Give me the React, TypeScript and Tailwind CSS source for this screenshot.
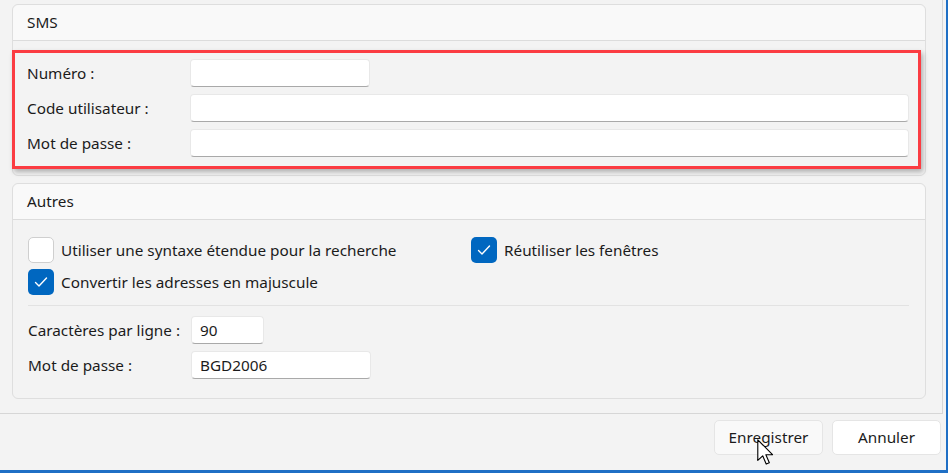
import type { ReactNode } from 'react'

const font = { fontFamily: '"Noto Sans", "Segoe UI", sans-serif' }

function Field({ width, value }: { width: string; value?: string }) {
  return (
    <div
      className={`${width} h-[28px] bg-white rounded-[4px] border border-[#e8e8e8] border-b-[#a9a9a9] flex items-center px-[8px] text-[15.3px] text-[#1b1b1b]`}
    >
      {value}
    </div>
  )
}

function Row({ label, children }: { label: string; children: ReactNode }) {
  return (
    <div className="flex items-center h-[28px]">
      <span className="w-[163px] shrink-0 text-[15.3px] text-[#1b1b1b]">{label}</span>
      {children}
    </div>
  )
}

function CheckBox({ checked, label }: { checked?: boolean; label: string }) {
  return (
    <div className="flex items-center h-[26px]">
      {checked ? (
        <div className="w-[26px] h-[26px] rounded-[5px] bg-[#0067c0] flex items-center justify-center">
          <svg width="16" height="16" viewBox="0 0 16 16" fill="none">
            <path d="M2.5 8.5 L6 12 L13.5 4" stroke="white" strokeWidth="1.4" strokeLinecap="round" strokeLinejoin="round" />
          </svg>
        </div>
      ) : (
        <div className="w-[26px] h-[26px] rounded-[5px] bg-white border border-[#cfcfcf]" />
      )}
      <span className="ml-[7px] text-[15.3px] text-[#1b1b1b]">{label}</span>
    </div>
  )
}

function Group({ title, children, className }: { title: string; children: ReactNode; className?: string }) {
  return (
    <div className={`w-[914px] rounded-[6px] border border-[#dedede] flex flex-col ${className ?? ''}`}>
      <div className="h-[36px] shrink-0 bg-[#f9f9f9] rounded-t-[6px] border-b border-[#dcdcdc] flex items-center px-[14px] text-[15.3px] text-[#1b1b1b]">
        {title}
      </div>
      {children}
    </div>
  )
}

export default function App() {
  return (
    <div
      className="w-[948px] h-[473px] bg-[#f3f3f3] border-r-[2px] border-b-[3px] border-[#1f6fc5] flex flex-col relative overflow-hidden"
      style={font}
    >
      <div className="w-[943px] h-[414px] shrink-0 border-r border-b border-[#d6d6d6] pl-[12px] pt-[4px] flex flex-col gap-[7px]">
        <Group title="SMS" className="h-[172px]">
          <div className="mt-[9px] ml-[-1px] w-[909px] h-[119px] border-[3px] border-[#fb3c42] shadow-[2px_3px_5px_rgba(0,0,0,0.28)] pl-[12px] pr-[9px] pt-[6px] flex flex-col gap-[7px]">
            <Row label="Numéro :">
              <Field width="w-[180px]" />
            </Row>
            <Row label="Code utilisateur :">
              <Field width="flex-1" />
            </Row>
            <Row label="Mot de passe :">
              <Field width="flex-1" />
            </Row>
          </div>
        </Group>

        <Group title="Autres" className="h-[216px]">
          <div className="pl-[15px] pr-[16px] pt-[17px] flex flex-col">
            <div className="flex">
              <div className="w-[443px] flex flex-col gap-[6px]">
                <CheckBox label="Utiliser une syntaxe étendue pour la recherche" />
                <CheckBox checked label="Convertir les adresses en majuscule" />
              </div>
              <CheckBox checked label="Réutiliser les fenêtres" />
            </div>
            <div className="h-px bg-[#e2e2e2] mt-[10px] mb-[10px]" />
            <div className="flex flex-col gap-[7px]">
              <Row label="Caractères par ligne :">
                <Field width="w-[73px]" value="90" />
              </Row>
              <Row label="Mot de passe :">
                <Field width="w-[180px]" value="BGD2006" />
              </Row>
            </div>
          </div>
        </Group>
      </div>

      <div className="flex justify-end gap-[9px] pt-[6px] pr-[5px]">
        <button className="w-[109px] h-[35px] rounded-[5px] bg-[#f9f9f9] border border-[#e5e5e5] text-[15.3px] text-[#1b1b1b]">
          Enregistrer
        </button>
        <button className="w-[109px] h-[35px] rounded-[5px] bg-white border border-[#e5e5e5] text-[15.3px] text-[#1b1b1b]">
          Annuler
        </button>
      </div>

      <svg className="absolute left-[757px] top-[439px]" width="19" height="27" viewBox="0 0 12 17">
        <path d="M0.5 0.5 L0.5 13.5 L3.6 10.6 L5.8 15.8 L7.8 15 L5.6 9.9 L9.8 9.9 Z" fill="white" stroke="black" strokeWidth="0.7" strokeLinejoin="round" />
      </svg>
    </div>
  )
}
